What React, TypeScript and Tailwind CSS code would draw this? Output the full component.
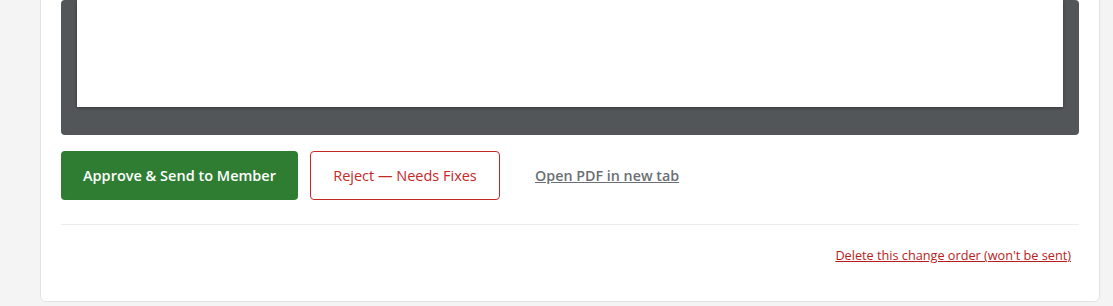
export default function App() {
  return (
    <div className="min-h-[306px] w-full bg-[#f4f4f4] pl-[40px] pr-[13px] pb-[4px] overflow-hidden" style={{ fontFamily: '"Open Sans", "Noto Sans", sans-serif' }}>
      <div className="mt-[-21px] w-[1060px] rounded-[6px] border border-[#e2e2e2] bg-white px-[20px] pt-[20px] pb-[20px]">
        <div className="rounded-[4px] bg-[#525659] px-[16px] pb-[28px]">
          <div className="h-[107px] bg-white shadow-[0_1px_3px_rgba(0,0,0,0.35)]" />
        </div>
        <div className="mt-[16px] flex items-center gap-[12px]">
          <button className="h-[49px] w-[237px] rounded-[4px] bg-[#2e7d32] text-[14.5px] font-semibold text-white">
            Approve &amp; Send to Member
          </button>
          <button className="h-[49px] w-[190px] rounded-[4px] border border-[#c62828] bg-white text-[14.5px] text-[#c62828]">
            Reject — Needs Fixes
          </button>
          <a href="#" className="pl-[23px] pr-[24px] text-[14.3px] font-semibold text-[#6b6f75] underline">
            Open PDF in new tab
          </a>
        </div>
        <div className="mt-[24px] border-t border-[#ececec] pt-[21px] flex justify-end pr-[8px]">
          <a href="#" className="text-[12.7px] text-[#b71c1c] underline">
            Delete this change order (won't be sent)
          </a>
        </div>
        <div className="h-[16px]" />
      </div>
    </div>
  );
}
